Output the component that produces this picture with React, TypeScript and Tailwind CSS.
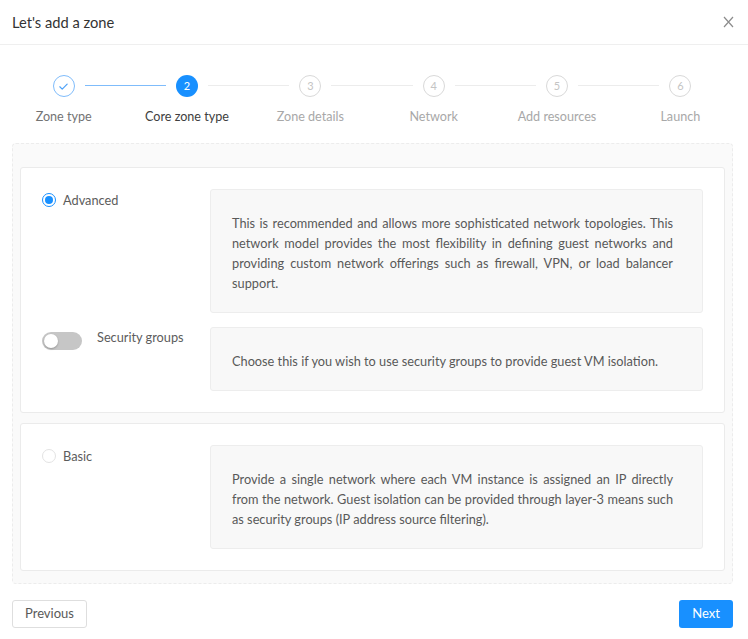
const steps = [
  { n: 1, label: "Zone type", state: "done" },
  { n: 2, label: "Core zone type", state: "current" },
  { n: 3, label: "Zone details", state: "wait" },
  { n: 4, label: "Network", state: "wait" },
  { n: 5, label: "Add resources", state: "wait" },
  { n: 6, label: "Launch", state: "wait" },
];

function StepIcon({ n, state }: { n: number; state: string }) {
  if (state === "done") {
    return (
      <div className="w-[22px] h-[22px] rounded-full border border-[#7fbcfb] bg-white flex items-center justify-center">
        <svg width="11" height="11" viewBox="0 0 12 12" fill="none">
          <path d="M2 6.3l2.6 2.6L10 3.4" stroke="#4ea2f8" strokeWidth="1.3" strokeLinecap="round" strokeLinejoin="round" />
        </svg>
      </div>
    );
  }
  if (state === "current") {
    return (
      <div className="w-[22px] h-[22px] rounded-full bg-[#1890ff] text-white text-[11px] flex items-center justify-center">
        {n}
      </div>
    );
  }
  return (
    <div className="w-[22px] h-[22px] rounded-full border border-[#d9d9d9] bg-white text-[#c4c4c4] text-[11px] flex items-center justify-center">
      {n}
    </div>
  );
}

function Steps() {
  return (
    <div className="grid grid-cols-6 w-[740px] ml-[2px] mt-[30px]">
      {steps.map((s, i) => (
        <div key={s.n} className="relative flex flex-col items-center">
          {i < steps.length - 1 && (
            <div
              className={
                "absolute top-[10px] left-[calc(50%+21px)] w-[calc(100%-42px)] h-px " +
                (s.state === "done" ? "bg-[#7fbcfb]" : "bg-[#ececec]")
              }
            />
          )}
          <StepIcon n={s.n} state={s.state} />
          <div
            className={
              "mt-[10px] mb-[-1px] text-[12.6px] leading-5 " +
              (s.state === "current"
                ? "text-[#404040]"
                : s.state === "done"
                ? "text-[#737373]"
                : "text-[#a8a8a8]")
            }
          >
            {s.label}
          </div>
        </div>
      ))}
    </div>
  );
}

function Radio({ checked }: { checked: boolean }) {
  return checked ? (
    <span className="w-[14px] h-[14px] rounded-full border border-[#1890ff] flex items-center justify-center bg-white">
      <span className="w-[8px] h-[8px] rounded-full bg-[#1890ff]" />
    </span>
  ) : (
    <span className="block w-[14px] h-[14px] rounded-full border border-[#e3e3e3] bg-white" />
  );
}

function Desc({ children }: { children: React.ReactNode }) {
  return (
    <div className="flex-1 bg-[#f8f8f8] border border-[#ededed] rounded-[3px] pl-[21px] pr-[29px] pt-[23px] pb-[19px] text-[12.75px] leading-5 text-[#595959] text-justify">
      {children}
    </div>
  );
}

export default function App() {
  return (
    <div className="w-[748px] h-[639px] bg-white font-['Lato',sans-serif] text-[#595959] flex flex-col">
      <div className="h-[45px] border-b border-[#efefef] flex items-center justify-between pl-[12px] pr-[14px]">
        <h1 className="text-[14.7px] text-[#333333]">Let's add a zone</h1>
        <svg width="11" height="12" viewBox="0 0 11 12">
          <path d="M1 1l9 10M10 1l-9 10" stroke="#8c8c8c" strokeWidth="1.2" />
        </svg>
      </div>

      <Steps />

      <div className="ml-[12px] mr-[15px] mt-[17px] h-[441px] bg-[#fafafa] border border-dashed border-[#ececec] rounded-[4px] px-[7px] pt-[23px] flex flex-col gap-[10px]">
        <div className="bg-white border border-[#ebebeb] rounded-[3px] p-[21px] flex flex-col gap-[14px]">
          <div className="flex">
            <label className="w-[168px] flex items-start gap-[7px] pt-[1px]">
              <span className="mt-[3px]"><Radio checked /></span>
              <span className="text-[12.75px] leading-5 text-[#5c5c5c]">Advanced</span>
            </label>
            <Desc>
              This is recommended and allows more sophisticated network topologies. This network model
              provides the most flexibility in defining guest networks and providing custom network
              offerings such as firewall, VPN, or load balancer support.
            </Desc>
          </div>
          <div className="flex">
            <div className="w-[168px] flex items-start gap-[15px]">
              <span className="mt-[5px] w-[40px] h-[18px] rounded-full bg-[#c6c6c6] flex items-center px-[2px]">
                <span className="w-[14px] h-[14px] rounded-full bg-white shadow-[0_1px_2px_rgba(0,0,0,0.25)]" />
              </span>
              <span className="text-[12.75px] leading-5 text-[#5c5c5c]">Security groups</span>
            </div>
            <Desc>Choose this if you wish to use security groups to provide guest VM isolation.</Desc>
          </div>
        </div>

        <div className="bg-white border border-[#ebebeb] rounded-[3px] p-[21px] flex">
          <label className="w-[168px] flex items-start gap-[7px] pt-[1px]">
            <span className="mt-[3px]"><Radio checked={false} /></span>
            <span className="text-[12.75px] leading-5 text-[#5c5c5c]">Basic</span>
          </label>
          <Desc>
            Provide a single network where each VM instance is assigned an IP directly from the
            network. Guest isolation can be provided through layer-3 means such as security groups (IP
            address source filtering).
          </Desc>
        </div>
      </div>

      <div className="flex justify-between pl-[12px] pr-[15px] mt-[16px]">
        <button className="h-[28px] px-[12px] border border-[#dedede] rounded-[3px] bg-white text-[13px] text-[#595959]">
          Previous
        </button>
        <button className="h-[28px] px-[13px] rounded-[3px] bg-[#1890ff] text-[13px] text-white">
          Next
        </button>
      </div>
    </div>
  );
}
